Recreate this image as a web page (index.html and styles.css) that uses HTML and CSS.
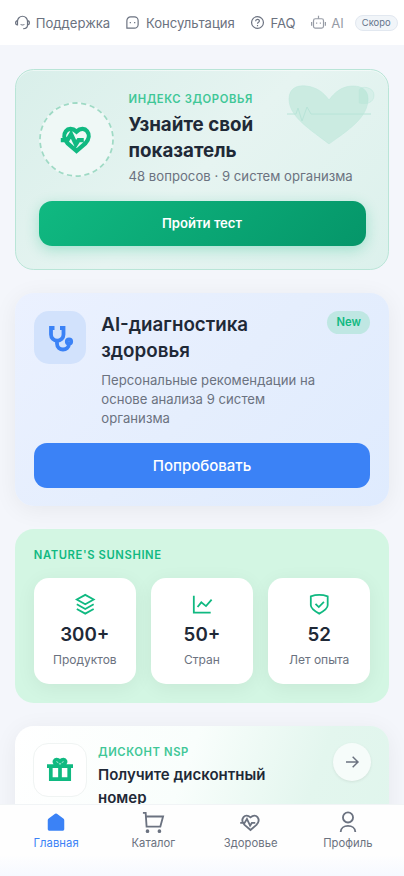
FILE: index.html
```html
<!DOCTYPE html>
<html lang="ru">
<head>
<meta charset="utf-8">
<meta name="viewport" content="width=device-width, initial-scale=1">
<title>Здоровье</title>
<link rel="stylesheet" href="styles.css">
</head>
<body>
<svg class="defs" width="0" height="0">
  <symbol id="pulse" viewBox="0 0 24 24" overflow="visible"><path d="M12 21.500 4.500 15C-2 8 5-1 12 5.500 19-1 26 8 19.500 15ZM-1 12.500h5.500l3-5 4 8.500 2.200-3.500H18"/></symbol>
</svg>
<header class="topbar">
  <a class="top-link"><svg class="icon" viewBox="0 0 24 24"><path d="M4 15V10a8 8 0 0 1 16 0v5M4 9C0 9 0 16 4 16ZM20 9c4 0 4 7 0 7ZM20 16c0 4-3 6-7 6M9 15q3 2 6 0"/></svg>Поддержка</a>
  <a class="top-link"><svg class="icon" viewBox="0 0 24 24"><path d="M3 21V9a6 6 0 0 1 6-6h6a6 6 0 0 1 6 6v6a6 6 0 0 1-6 6ZM8.500 11v2M15.500 11v2"/></svg>Консультация</a>
  <a class="top-link"><svg class="icon" viewBox="0 0 24 24"><circle cx="12" cy="12" r="9.500"/><path d="M9 10c0-4 6-4 6-.5 0 2.500-3 2-3 4.500M12 16v2"/></svg>FAQ</a>
  <a class="top-link soon"><svg class="icon" viewBox="0 0 24 24"><rect x="4" y="6" width="16" height="15" rx="3"/><path d="M12 1v5M1 11v6M23 11v6M9 12v2M15 12v2"/></svg>AI</a>
  <span class="soon-badge">Скоро</span>
</header>
<main class="feed">
  <section class="card index-card">
    <svg class="heart-art" viewBox="0 0 90 64">
      <path class="heart-fill" d="M44 60C26 46 4 33 4 15 4 3 14 1 21 2 32 3 39 9 44 16 50 8 57 2 68 2 77 2 83 6 83 15 83 34 62 47 44 60Z"/>
      <path class="heart-corner" d="M74 19V6C76 1 89 3 89 11 89 19 81 21 74 19Z"/>
      <path class="heart-line" d="M2 30h9l2-6 4 13 5-14 4 7h60"/>
    </svg>
    <div class="index-head">
      <div class="ring">
        <svg class="dashes" viewBox="0 0 76 76"><circle cx="38" cy="38" r="37"/></svg>
        <svg class="icon" viewBox="0 0 24 24"><use href="#pulse"/></svg>
      </div>
      <div class="index-copy">
        <div class="eyebrow">ИНДЕКС ЗДОРОВЬЯ</div>
        <h2 class="title">Узнайте свой<br>показатель</h2>
        <div class="hint">48 вопросов · 9 систем организма</div>
      </div>
    </div>
    <a class="button button-green">Пройти тест</a>
  </section>

  <section class="card ai-card">
    <div class="ai-head">
      <div class="tile"><svg class="icon" viewBox="0 0 24 24"><path d="M6.500 2H3v6.500a6 6 0 0 0 12.500 0V2H12M9 14v3.500c0 8 12 8 12 0"/><circle cx="21" cy="15.500" r="2.200"/></svg></div>
      <div class="ai-copy">
        <h2 class="title ai-title">AI-диагностика<br>здоровья</h2>
        <p class="ai-text">Персональные рекомендации на основе анализа 9 систем организма</p>
      </div>
      <span class="new-badge">New</span>
    </div>
    <a class="button button-blue">Попробовать</a>
  </section>

  <section class="card stats-card">
    <div class="eyebrow brand">NATURE'S SUNSHINE</div>
    <div class="stats">
      <div class="stat"><svg class="icon" viewBox="0 0 24 24"><path d="m12 2 9 5-9 5-9-5ZM3 12l9 5 9-5M3 17l9 5 9-5"/></svg><b class="value">300+</b><span class="label">Продуктов</span></div>
      <div class="stat"><svg class="icon" viewBox="0 0 24 24"><path d="M3 3v18h18M7 15l4-5 5 4 6-7"/></svg><b class="value">50+</b><span class="label">Стран</span></div>
      <div class="stat"><svg class="icon" viewBox="0 0 24 24"><path d="M3 3.500Q12 .5 21 3.500V13c0 3-2 5-9 9-7-4-9-6-9-9ZM8 11.500l3.500 3.500 5.500-5.500"/></svg><b class="value">52</b><span class="label">Лет опыта</span></div>
    </div>
  </section>

  <section class="card discount-card">
    <div class="gift"><svg class="icon" viewBox="0 0 24 24"><path d="M0 8.500h24M3.500 9v11.500h17V9M12 8v12M11 7C4 7 7-1 12 4c5-5 8 3 1 3"/></svg></div>
    <div class="discount-copy">
      <div class="eyebrow">ДИСКОНТ NSP</div>
      <h3 class="discount-title">Получите дисконтный номер</h3>
    </div>
    <div class="arrow"><svg class="icon" viewBox="0 0 24 24"><path d="M3 12h18M13 4l8 8-8 8"/></svg></div>
  </section>
</main>
<nav class="tabbar">
  <a class="tab active"><svg class="icon" viewBox="0 0 24 24"><path d="M3 10q0-1 1-1.700L11 3q1-.8 2 0l7 5.300q1 .7 1 1.700v10q0 1.500-1.500 1.500h-15Q3 21.500 3 20Z"/></svg>Главная</a>
  <a class="tab"><svg class="icon" viewBox="0 0 24 24"><path d="M1 2h3l1 15h15L23 6H5"/><circle class="dot" cx="6" cy="22" r="1"/><circle class="dot" cx="19" cy="22" r="1"/></svg>Каталог</a>
  <a class="tab"><svg class="icon small" viewBox="0 0 24 24"><use href="#pulse"/></svg>Здоровье</a>
  <a class="tab"><svg class="icon" viewBox="0 0 24 24"><circle cx="12" cy="7" r="5.500"/><path d="M4 23c0-9 16-9 16 0"/></svg>Профиль</a>
</nav>
</body>
</html>
```
FILE: styles.css
```css
* { box-sizing: border-box; }
html { overflow: hidden; }
body {
  margin: 0;
  height: 876px;
  overflow: hidden;
  background: #f4f6fb;
  color: #1f2937;
  font-family: Inter, "Liberation Sans", sans-serif;
  font-size: 15px;
}
.defs { position: absolute; }
.icon { display: block; flex: none; overflow: visible; fill: none; stroke: currentColor; stroke-width: 2; }
h2, h3, p { margin: 0; }

.topbar {
  display: flex;
  align-items: center;
  gap: 15px;
  height: 45px;
  padding: 0 0 0 15px;
  background: #fff;
  color: #6b7280;
  font-size: 13.125px;
  white-space: nowrap;
}
.top-link { display: flex; align-items: center; gap: 5.700px; }
.top-link .icon { width: 15px; height: 15px; stroke-width: 1.900; }
.soon { opacity: .7; }
.soon-badge {
  margin-left: -4px;
  height: 16px;
  padding: 0 6px;
  border: 1px solid #e2e8f0;
  border-radius: 8px;
  background: #f1f5f9;
  color: #64748b;
  font-size: 9.375px;
  line-height: 14px;
}

.feed { display: flex; flex-direction: column; gap: 23px; padding: 23.500px 15px 0; }
.card { flex: none; border-radius: 18.750px; }
.eyebrow { color: #3fc797; font-size: 11.250px; font-weight: 600; letter-spacing: .6px; line-height: 17px; }
.title { font-size: 18.750px; font-weight: 700; line-height: 26px; }
.button {
  display: flex;
  align-items: center;
  justify-content: center;
  height: 45px;
  border-radius: 13px;
  color: #fff;
}

.index-card {
  position: relative;
  height: 201px;
  padding: 21px 22.500px 0;
  border: 1px solid #b9e5d7;
  background: linear-gradient(135deg, #d9efea 0%, #e6f4f1 50%, #dcf1ec 100%);
  box-shadow: inset 0 1px 0 rgba(255, 255, 255, .5);
}
.heart-art { position: absolute; top: 14px; right: 13px; width: 90px; height: 64px; }
.heart-fill { fill: #cbebe1; stroke: #bce6da; stroke-width: .5; }
.heart-corner { fill: #10b981; fill-opacity: .06; stroke: #bde6da; stroke-width: .5; }
.heart-line { fill: none; stroke: #b8e4d8; stroke-width: 1; }
.index-head { position: relative; display: flex; align-items: center; gap: 15px; height: 97px; }
.ring {
  position: relative;
  display: grid;
  place-items: center;
  width: 75px;
  height: 75px;
  border-radius: 50%;
  background: #eff8f6;
  color: #10b981;
}
.dashes {
  position: absolute;
  inset: 0;
  fill: none;
  stroke: #9fdac5;
  stroke-width: 1.800;
  stroke-dasharray: 5.300 3.640;
}
.ring .icon { width: 29px; height: 29px; stroke-width: 3.500; }
.index-copy { padding-bottom: 2px; }
.hint { margin-top: 2px; color: #6b7280; font-size: 13.125px; letter-spacing: .03px; line-height: 20px; }
.index-copy .title { margin-top: 4px; }
.button-green {
  margin-top: 13px;
  background: linear-gradient(135deg, #10b981, #059669);
  box-shadow: 0 4px 14px rgba(16, 185, 129, .3);
  font-size: 13.125px;
  font-weight: 600;
}

.ai-card {
  height: 213.500px;
  padding: 18.750px;
  background: linear-gradient(135deg, #ebf1ff, #e5eefd 50%, #dfebfe);
  box-shadow: 0 4px 24px rgba(0, 0, 0, .06);
}
.ai-head { display: flex; align-items: flex-start; gap: 15px; height: 131.500px; }
.tile {
  display: grid;
  place-items: center;
  flex: none;
  width: 52.500px;
  height: 52.500px;
  border-radius: 15px;
  background: #d2e2fc;
  color: #3b82f6;
}
.tile .icon { width: 24px; height: 24px; stroke-width: 3.800; }
.ai-copy { flex: 1; }
.ai-title { font-weight: 600; padding-top: .5px; }
.ai-text { margin-top: 7.500px; width: 225px; color: #6b7280; font-size: 13.125px; letter-spacing: .03px; line-height: 19px; }
.new-badge {
  margin-left: -60px;
  padding: 0 9.400px;
  border-radius: 12px;
  background: #bfe7e3;
  color: #10b981;
  font-size: 11.250px;
  font-weight: 600;
  line-height: 22.500px;
}
.button-blue { background: #3b82f6; font-weight: 500; }

.stats-card { height: 173.500px; padding: 17.500px 18.750px 0; background: #d3f6e3; }
.brand { color: #10b981; }
.stats { display: grid; grid-template-columns: repeat(3, 1fr); gap: 15px; margin-top: 14.300px; }
.stat {
  display: flex;
  flex-direction: column;
  align-items: center;
  height: 106.300px;
  padding-top: 15px;
  border-radius: 15px;
  background: #fff;
  box-shadow: 0 4px 20px rgba(0, 0, 0, .06);
}
.stat .icon { width: 22.500px; height: 22.500px; color: #10b981; stroke-width: 1.900; }
.value { margin-top: 5.600px; font-size: 18.750px; font-weight: 600; line-height: 28px; }
.label { margin-top: 2px; color: #6b7280; font-size: 12px; line-height: 18px; }

.discount-card {
  display: flex;
  align-items: flex-start;
  height: 190px;
  padding: 17.500px 18px;
  background: linear-gradient(110deg, #fff 0%, #f9fefc 42%, #e3f6ee 72%, #dff5ec 100%);
  box-shadow: 0 4px 24px rgba(0, 0, 0, .06);
}
.gift {
  display: grid;
  place-items: center;
  width: 54px;
  height: 54px;
  border: 1px solid #f0f4f3;
  border-radius: 15px;
  background: #fff;
  color: #10b981;
}
.gift .icon { width: 26px; height: 26px; stroke-width: 3.400; }
.discount-copy { flex: 1; padding: 1px 0 0 11px; }
.discount-title { width: 190px; margin-top: 2px; font-size: 15px; font-weight: 600; line-height: 23px; }
.arrow {
  display: grid;
  place-items: center;
  width: 38px;
  height: 38px;
  border-radius: 50%;
  background: #f6fcfa;
  box-shadow: 0 1px 3px rgba(0, 0, 0, .08);
  color: #6b7280;
}
.arrow .icon { width: 16px; height: 16px; stroke-width: 2.200; }

.tabbar {
  position: fixed;
  inset: auto 0 0;
  display: flex;
  height: 72px;
  padding: 6px 7.500px 0;
  border-top: 1px solid #f1f4f6;
  background: linear-gradient(#fefefe 70%, #f6f9ff);
}
.tab {
  display: flex;
  flex: 1;
  flex-direction: column;
  align-items: center;
  gap: 2px;
  color: #6b7280;
  font-size: 11.250px;
  letter-spacing: .04px;
  line-height: 16px;
}
.tab .icon { width: 22px; height: 22px; }
.tab .small { width: 19px; height: 19px; margin: 1.500px; stroke-width: 2.300; }
.active { color: #3b82f6; }
.active .icon { fill: currentColor; stroke: none; }
.dot { fill: currentColor; }
```
